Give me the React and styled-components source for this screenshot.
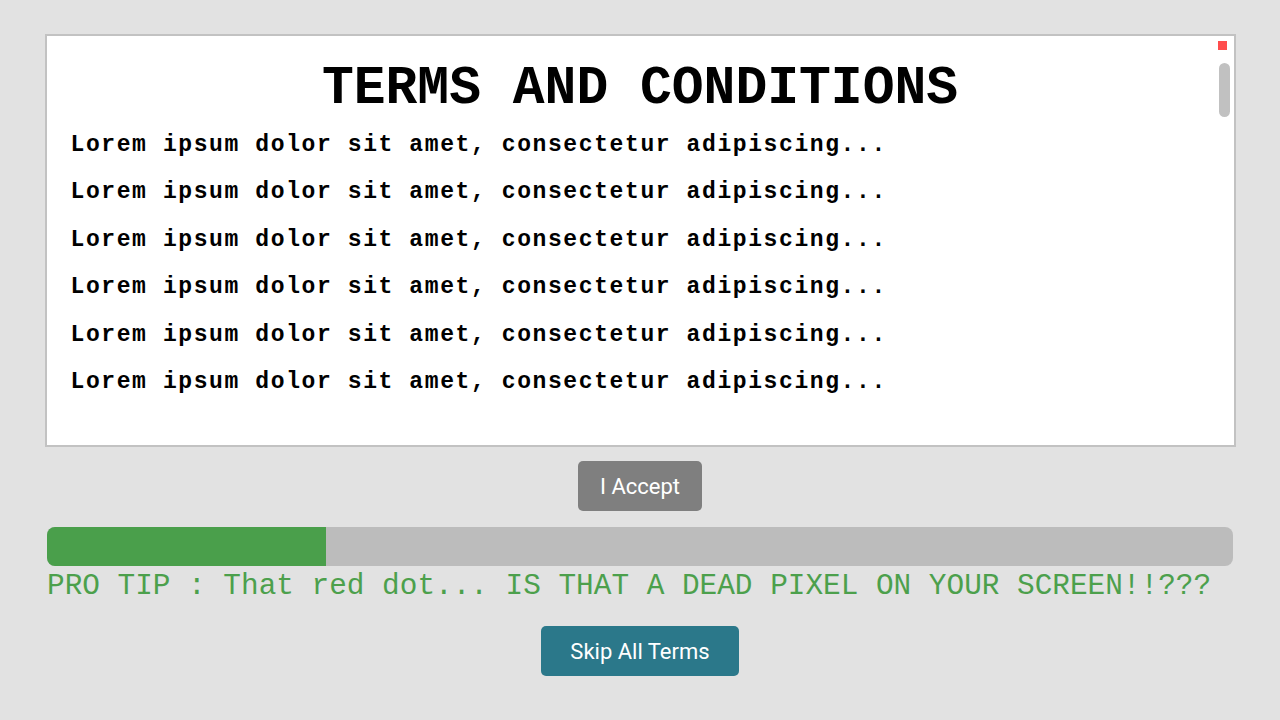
import styled, { createGlobalStyle } from 'styled-components';

// global
const GlobalStyle = createGlobalStyle`
  html, body {
    margin: 0;
    padding: 0;
    background: #e2e2e2;
  }
`;

// styles
const StyledPage = styled.div`
  width: 1280px;
  height: 720px;
  display: flex;
  flex-direction: column;
  align-items: center;
  overflow: hidden;
`;

const StyledPanel = styled.section`
  position: relative;
  box-sizing: border-box;
  width: 1191px;
  height: 413px;
  margin-top: 34px;
  padding: 21px 24px 0;
  background: #ffffff;
  border: 2px solid #c2c2c2;
  overflow: hidden;
  font-family: 'Liberation Mono', 'Courier New', monospace;
  font-weight: bold;
  color: #000;
`;

const StyledTitle = styled.h1`
  margin: 0;
  font-size: 53px;
  line-height: 64.8px;
  font-weight: bold;
  text-align: center;
`;

const StyledLine = styled.p`
  margin: 0;
  font-size: 23px;
  line-height: 47.5px;
  letter-spacing: 1.6px;
  white-space: nowrap;
`;

const StyledDeadPixel = styled.span`
  position: absolute;
  top: 5px;
  right: 7px;
  width: 9px;
  height: 9px;
  background: #ff4d4d;
`;

const StyledThumb = styled.span`
  position: absolute;
  top: 27px;
  right: 4px;
  width: 11px;
  height: 54px;
  border-radius: 6px;
  background: #c1c1c1;
`;

const StyledButton = styled.button`
  box-sizing: border-box;
  height: 50px;
  margin-top: ${({ $gap }) => $gap}px;
  padding: 0 ${({ $padX }) => $padX}px;
  border: none;
  border-radius: 5px;
  background: ${({ $bg }) => $bg};
  color: #ffffff;
  font-family: Roboto, 'Noto Sans', sans-serif;
  font-size: 22px;
  cursor: pointer;
`;

const StyledProgress = styled.div`
  width: 1186px;
  height: 39px;
  margin-top: 16px;
  border-radius: 8px;
  background: #bcbcbc;
  overflow: hidden;
  display: flex;
`;

const StyledFill = styled.div`
  height: 100%;
  background: #4a9f4b;
`;

const StyledTip = styled.p`
  box-sizing: border-box;
  width: 1190px;
  margin: 4px 0 0;
  padding-left: 2px;
  font-family: 'Liberation Mono', 'Courier New', monospace;
  font-size: 29.4px;
  color: #4ca04c;
  white-space: nowrap;
`;

const lines = Array.from({ length: 6 }, (_, i) => i);

const App = () => {
  const progress = 279 / 1186;

  return (
    <>
      <GlobalStyle />
      <StyledPage>
        <StyledPanel>
          <StyledDeadPixel />
          <StyledThumb />
          <StyledTitle>TERMS AND CONDITIONS</StyledTitle>
          {lines.map((i) => (
            <StyledLine key={i}>Lorem ipsum dolor sit amet, consectetur adipiscing...</StyledLine>
          ))}
        </StyledPanel>
        <StyledButton $gap={14} $padX={22} $bg="#7f7f7f">
          I Accept
        </StyledButton>
        <StyledProgress>
          <StyledFill style={{ width: `${progress * 100}%` }} />
        </StyledProgress>
        <StyledTip>PRO TIP : That red dot... IS THAT A DEAD PIXEL ON YOUR SCREEN!!???</StyledTip>
        <StyledButton $gap={23} $padX={29} $bg="#2b788a">
          Skip All Terms
        </StyledButton>
      </StyledPage>
    </>
  );
};

export default App;
